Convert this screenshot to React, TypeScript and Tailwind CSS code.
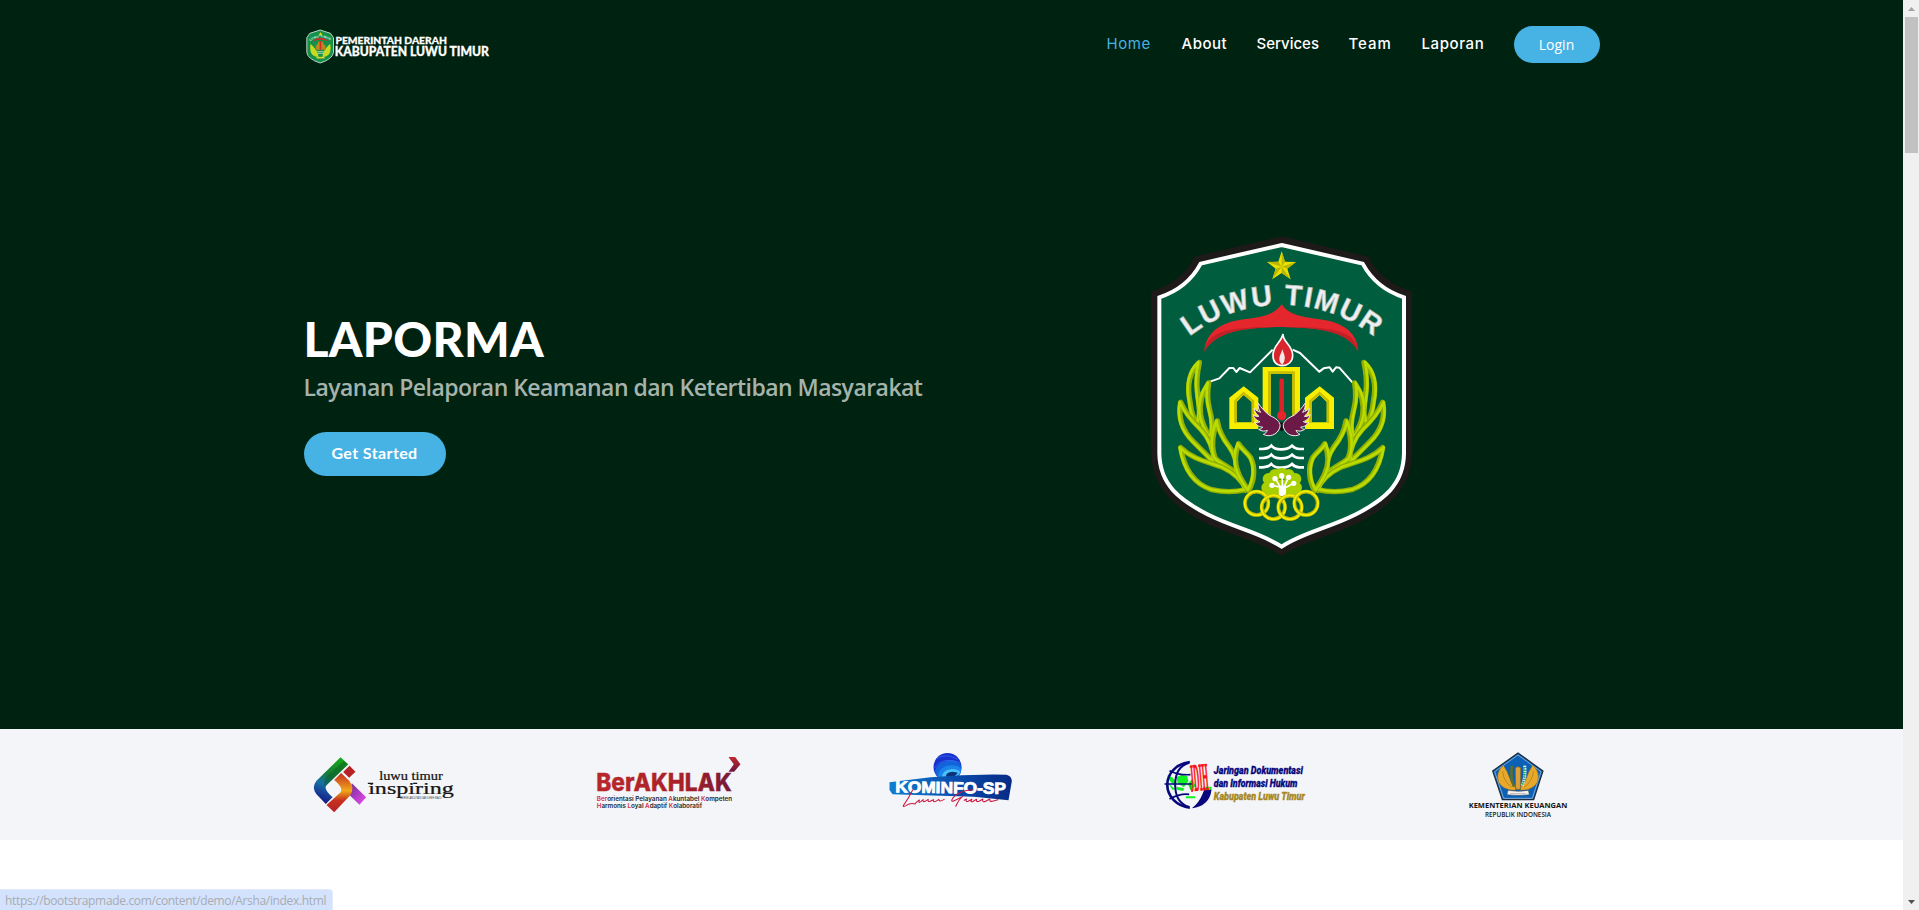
import React from "react";

const navItems = [
  { label: "About", box: "w-[45px] tracking-[0.5px]" },
  { label: "Services", box: "w-[62px]" },
  { label: "Team", box: "w-[43px] tracking-[1px]" },
  { label: "Laporan", box: "w-[62px] tracking-[0.6px]" },
];

const LEAVES = [
  "M178 412 C148 440 140 480 150 530 C153 560 160 580 172 602 C184 570 176 540 172 500 C168 465 172 440 178 412Z",
  "M206 474 C188 500 176 530 182 570 C186 600 200 620 212 640 C222 610 216 580 208 550 C200 520 202 500 206 474Z",
  "M122 532 C114 575 124 615 160 650 C180 670 200 690 222 712 C222 670 208 640 182 612 C156 588 136 565 122 532Z",
  "M232 588 C218 625 212 665 226 700 C240 715 262 722 288 744 C294 715 286 690 268 665 C248 640 236 615 232 588Z",
  "M122 668 C132 730 160 776 215 794 C250 802 285 802 318 794 C306 765 285 745 250 728 C210 712 160 705 122 668Z",
  "M296 656 C282 690 284 720 296 746 C304 765 314 780 326 796 C344 765 346 725 332 698 C320 680 304 672 296 656Z",
];

function WreathHalf() {
  return (
    <g strokeLinejoin="round">
      <path d="M182 500 C190 600 205 690 322 800" fill="none" stroke="#96b900" strokeWidth="15" />
      {LEAVES.map((d) => (
        <g key={d}>
          <path d={d} fill="#005e3e" stroke="#93b000" strokeWidth="16" />
          <path d={d} fill="none" stroke="#bbdc00" strokeWidth="8" transform="translate(-3 -1)" />
        </g>
      ))}
    </g>
  );
}

function House() {
  return (
    <g>
      <path fillRule="evenodd" fill="#f7ee00" d="M268 518 L311 484 L355 518 V612 H268Z M290 531 L311 510 L335 531 V592 H290Z" />
      <path d="M286 594 V528 L311 504 L339 528 V594" fill="none" stroke="#c9bd00" strokeWidth="7" />
    </g>
  );
}

function Wing() {
  return (
    <path
      d="M420 598 C416 585 402 577 388 571 C375 560 364 549 355 535 C353 545 356 553 362 562 C354 559 348 556 342 550 C344 562 350 568 357 574 C350 575 344 573 339 569 C344 582 352 587 360 590 C354 594 349 594 344 592 C351 603 360 606 368 606 C365 611 360 613 356 613 C366 620 375 619 382 616 C380 622 376 626 370 628 C386 637 412 632 420 606Z"
      fill="#6b1946"
      stroke="#f5eef2"
      strokeWidth="3"
    />
  );
}

function Crest({ className }: { className?: string }) {
  return (
    <svg viewBox="0 0 855 1035" className={className} aria-label="Luwu Timur">
      <path
        d="M425 34 L686 95 Q720 168 816 200 V685 C814 790 745 845 665 888 C580 932 500 945 425 992 C350 945 270 932 185 888 C105 845 36 790 34 685 V200 Q130 168 164 95Z"
        fill="#1e1a19"
      />
      <path
        d="M425 60 L668 116 Q708 190 792 217 V685 C791 780 730 825 648 868 C565 910 490 922 425 965 C360 922 285 910 202 868 C120 825 59 780 58 685 V217 Q142 190 182 116Z"
        fill="#005e3e"
        stroke="#fff"
        strokeWidth="12"
      />
      <path d="M425 79 L435 110 L468 111 L442 131 L452 163 L425 144 L397 163 L407 131 L381 111 L415 110Z" fill="#e8e000" />
      <path d="M425 79 V125 L435 110Z M468 111 L425 125 L442 131Z M452 163 L425 125 V144Z M397 163 L425 125 L407 131Z M381 111 L425 125 L415 110Z" fill="#bdb600" />
      <path id="crest-arc" d="M148 334 A451 451 0 0 1 708 340" fill="none" />
      <g fontFamily="Liberation Sans, sans-serif" fontWeight="700" fontSize="86">
        <text fill="#efefef" stroke="#b9bfbb" strokeWidth="2">
          <textPath href="#crest-arc" textLength="596">LUWU TIMUR</textPath>
        </text>
      </g>
      <path
        d="M425 238 C446 268 480 275 525 281 C600 288 652 315 655 380 C625 325 560 308 425 306 C290 308 225 325 193 380 C198 315 250 288 325 281 C370 275 404 268 425 238Z"
        fill="#e5262d"
      />
      <path d="M193 380 C202 320 260 304 425 306 C290 308 225 325 193 380Z M655 380 C646 320 590 304 425 306 C560 308 625 325 655 380Z" fill="#c21f26" />
      <path d="M210 470 L238 460 L268 429 L280 429 L289 441 L299 429 L330 442 L398 374 M458 374 L480 384 L538 440 L551 430 L569 427 L578 440 L588 427 L598 428 L637 472" fill="none" stroke="#fff" strokeWidth="6" strokeLinejoin="round" />
      <path d="M429 327 C428 352 458 360 458 391 C458 411 443 422 427 422 C410 422 398 410 399 389 C400 360 424 352 429 327Z" fill="#d9252b" stroke="#fff" strokeWidth="5" />
      <path d="M427 372 C430 384 436 392 434 403 C433 412 429 416 427 419 C421 415 417 408 418 400 C419 388 426 382 427 372Z" fill="#f4e7e7" />
      <House />
      <g transform="translate(850 0) scale(-1 1)">
        <House />
      </g>
      <path d="M368 426 H480 V612 H457 V447 H392 V612 H368Z" fill="#f7ee00" />
      <path d="M388 600 V443 H461 V600" fill="none" stroke="#c9bd00" strokeWidth="8" />
      <path d="M425 467 V570" stroke="#dc232a" strokeWidth="14" strokeLinecap="round" />
      <circle cx="425" cy="572" r="14" fill="#e5262d" />
      <path d="M413 589 L425 593 L437 589 L434 613 L425 619 L416 613Z" fill="#111" />
      <Wing />
      <g transform="translate(850 0) scale(-1 1)">
        <Wing />
      </g>
      {[667, 694, 722].map((y) => (
        <path
          key={y}
          transform={`translate(0 ${y})`}
          d="M357 5 H368 Q386 4 394 -5 Q404 7 425 6 Q444 6 456 -5 Q466 6 480 5 H492"
          fill="none"
          stroke="#fff"
          strokeWidth="8"
        />
      ))}
      <WreathHalf />
      <g transform="translate(850 0) scale(-1 1)">
        <WreathHalf />
      </g>
      <g fill="#a8cf00">
        <circle cx="382" cy="788" r="18" />
        <circle cx="386" cy="762" r="18" />
        <circle cx="405" cy="750" r="18" />
        <circle cx="425" cy="746" r="18" />
        <circle cx="446" cy="750" r="18" />
        <circle cx="466" cy="762" r="18" />
        <circle cx="468" cy="788" r="18" />
        <path d="M378 765 H472 V812 H378Z" />
      </g>
      <path d="M419 812 V786 L396 781 M422 788 L406 761 M427 788 V752 M431 788 L446 757 M436 788 L461 775" fill="none" stroke="#fff" strokeWidth="5" />
      <path d="M417 782 H438 V814 H417Z" fill="#fff" />
      <g fill="#fff">
        <circle cx="396" cy="781" r="8" />
        <circle cx="405" cy="761" r="8" />
        <circle cx="425" cy="752" r="8" />
        <circle cx="446" cy="757" r="8" />
        <circle cx="461" cy="775" r="8" />
      </g>
      {[
        [350, 835],
        [400, 847],
        [450, 847],
        [498, 835],
      ].map(([x, y]) => (
        <g key={x} fill="none">
          <circle cx={x} cy={y} r="35" stroke="#bdb700" strokeWidth="11" />
          <circle cx={x} cy={y} r="36" stroke="#f2ee00" strokeWidth="6" />
        </g>
      ))}
    </svg>
  );
}

function BrandLogo() {
  return (
    <svg viewBox="40.5 0 570 180" className="h-[60px] w-[190px]">
      <path d="M89 45 L120 55 L129 68 V112 Q127 132 89 144 Q51 132 49 112 V68 L58 55Z" fill="#14904a" stroke="#b9d6c4" strokeWidth="3" />
      <path id="brand-arc" d="M59 78 Q89 56 121 78" fill="none" />
      <text fontFamily="Liberation Sans, sans-serif" fontWeight="700" fontSize="9" fill="#dff3e4">
        <textPath href="#brand-arc" textLength="64">LUWU TIMUR</textPath>
      </text>
      <path d="M90 51 L92 56 L97 56 L93 59 L95 64 L90 61 L85 64 L87 59 L83 56 L88 56Z" fill="#e7dc1d" />
      <path d="M66 79 Q72 70 90 68 Q108 70 115 79 Q90 70 66 79Z" fill="#d22b2b" />
      <path d="M60 86 Q54 124 84 126 Q84 108 60 86Z M119 86 Q126 124 96 126 Q95 108 119 86Z" fill="#c9d821" />
      <path d="M76 92 L82 86 V80 H98 V86 L105 92 V104 H76Z" fill="#b98a1e" />
      <path d="M90 78 V104" stroke="#d22b2b" strokeWidth="5" />
      <path d="M80 110 H100 M82 115 H98" stroke="#e8f5ea" strokeWidth="2" />
      <path d="M78 128 H102" stroke="#d9d32a" strokeWidth="5" />
      <g fontFamily="Lato, sans-serif" fontWeight="900" fill="#fff" stroke="#fff" strokeWidth=".8">
        <text x="135" y="87" fontSize="29" textLength="334" lengthAdjust="spacingAndGlyphs">PEMERINTAH DAERAH</text>
        <text x="133" y="123" fontSize="37" textLength="462" lengthAdjust="spacingAndGlyphs">KABUPATEN LUWU TIMUR</text>
      </g>
    </svg>
  );
}

const partnerSize = "h-[90px] w-40";

function InspiringLogo() {
  return (
    <svg viewBox="10.5 0 480 270" className={partnerSize}>
      <defs>
        <linearGradient id="insp-a" x1="0.6" y1="0" x2="0.3" y2="1">
          <stop offset="0" stopColor="#17a51b" />
          <stop offset="0.4" stopColor="#157b3c" />
          <stop offset="0.6" stopColor="#1572a5" />
          <stop offset="1" stopColor="#171187" />
        </linearGradient>
        <linearGradient id="insp-b" x1="0.3" y1="0" x2="0.3" y2="1">
          <stop offset="0" stopColor="#c32c22" />
          <stop offset="0.45" stopColor="#f2a81a" />
          <stop offset="0.7" stopColor="#c5301e" />
          <stop offset="1" stopColor="#b3242a" />
        </linearGradient>
        <linearGradient id="insp-c" x1="0" y1="0" x2="1" y2="1">
          <stop offset="0" stopColor="#6d2b92" />
          <stop offset="1" stopColor="#ef4df0" />
        </linearGradient>
      </defs>
      <g transform="translate(-2 0)">
        <path d="M122 52 L145 73 L80 136 Q70 147 98 172 L78 192 L50 163 Q34 142 50 122Z" fill="url(#insp-a)" />
        <path d="M145 73 L74 141 Q66 118 98 93 L132 62Z" fill="#07531b" opacity=".4" />
        <path d="M156 130 L199 172 L179 194 L148 164Z" fill="url(#insp-c)" />
        <path d="M124 99 L148 122 Q167 145 150 167 L103 217 L80 195 L121 158 Q133 145 103 120Z" fill="url(#insp-b)" />
        <path d="M149 77 L167 95 L148 113 L130 96Z" fill="#b62225" />
      </g>
      <g fontFamily="Liberation Serif, serif" fill="#151515" stroke="#151515" strokeWidth=".7">
        <text x="236" y="121" fontSize="35" textLength="191" lengthAdjust="spacingAndGlyphs">luwu timur</text>
        <text x="203" y="161" fontSize="52" textLength="257" lengthAdjust="spacingAndGlyphs">inspiring</text>
      </g>
      <path d="M202 130 H218 M338 130 H350" stroke="#151515" strokeWidth="4" />
      <text x="299" y="176" fontFamily="Liberation Sans, sans-serif" fontSize="8" fill="#444" textLength="124" lengthAdjust="spacingAndGlyphs">BERKELANJUTAN DAN LEBIH MAJU</text>
    </svg>
  );
}

function BerakhlakLogo() {
  const red = "#d92b33";
  return (
    <svg viewBox="862.5 0 480 270" className={partnerSize}>
      <defs>
        <linearGradient id="ber-g" gradientUnits="userSpaceOnUse" x1="890" y1="0" x2="1320" y2="0">
          <stop offset="0" stopColor="#b8272b" />
          <stop offset="0.6" stopColor="#a92028" />
          <stop offset="1" stopColor="#6c1740" />
        </linearGradient>
        <linearGradient id="ber-arrow" gradientUnits="userSpaceOnUse" x1="0" y1="51" x2="0" y2="95">
          <stop offset="0" stopColor="#c02a2c" />
          <stop offset="1" stopColor="#6c1740" />
        </linearGradient>
      </defs>
      <text x="887" y="154" fontFamily="Inter, sans-serif" fontWeight="800" fontSize="74" fill="url(#ber-g)" stroke="url(#ber-g)" strokeWidth="1" textLength="407" lengthAdjust="spacingAndGlyphs">BerAKHLAK</text>
      <path d="M1284 51 H1304 L1320 73 L1301 95 H1284 L1300 73Z" fill="url(#ber-arrow)" />
      <g fontFamily="Inter, sans-serif" fontWeight="600" fontSize="18" fill="#26262c">
        <text x="889" y="183" textLength="406" lengthAdjust="spacingAndGlyphs">
          <tspan fill={red}>Ber</tspan>orientasi Pelayanan <tspan fill={red}>A</tspan>kuntabel <tspan fill={red}>K</tspan>ompeten
        </text>
        <text x="889" y="205" textLength="316" lengthAdjust="spacingAndGlyphs">
          <tspan fill={red}>H</tspan>armonis <tspan fill={red}>L</tspan>oyal <tspan fill={red}>A</tspan>daptif <tspan fill={red}>K</tspan>olaboratif
        </text>
      </g>
    </svg>
  );
}

function KominfoLogo() {
  return (
    <svg viewBox="4.5 0 480 270" className={partnerSize}>
      <defs>
        <linearGradient id="kom-g" x1="0" y1="0" x2="1" y2="0">
          <stop offset="0" stopColor="#0d7fd3" />
          <stop offset="0.55" stopColor="#0a4bab" />
          <stop offset="1" stopColor="#062a86" />
        </linearGradient>
      </defs>
      <circle cx="231" cy="81" r="42" fill="#1932cf" />
      <path d="M192 94 Q205 60 248 61 Q266 65 272 78 Q276 116 240 122 Q200 120 192 94Z" fill="#1264dc" />
      <path d="M202 110 Q206 77 246 76 Q268 78 272 88 Q268 112 248 118 Q215 122 202 110Z" fill="#1c83ea" />
      <path d="M214 112 Q215 90 244 87 Q264 88 270 96 Q262 112 240 115Z" fill="#49c0fb" />
      <path d="M226 110 Q226 97 246 95 L262 98 Q254 110 240 112Z" fill="#0b3277" />
      <path d="M197 56 Q225 38 262 58 M192 84 Q214 48 270 68" fill="none" stroke="#3d6cf0" strokeWidth="2" />
      <path d="M57 127 L180 112 Q290 102 408 104 Q424 108 424 124 L414 181 L310 170 L66 163 L57 150Z" fill="url(#kom-g)" />
      <text x="74" y="157" fontFamily="Liberation Sans, sans-serif" fontWeight="700" fontSize="48" fill="#fff" stroke="#fff" strokeWidth="2.5" textLength="332" lengthAdjust="spacingAndGlyphs" transform="rotate(.8 74 157)">KOMINFO-SP</text>
      <g fill="none" stroke="#cc1742" strokeLinecap="round" strokeLinejoin="round">
        <path d="M126 151 Q114 176 99 196 Q96 203 106 197 Q120 188 134 192 M134 191 Q143 181 147 180 Q142 191 151 185 L158 179 Q156 187 164 184 L173 178 Q171 187 179 184 L189 179 Q187 188 196 184 L205 178 Q205 188 221 178" strokeWidth="3.2" />
        <path d="M308 149 Q266 151 248 173 Q238 188 251 182 L276 170 Q265 178 256 199 M281 181 L288 177 Q284 187 293 184 L304 178 Q298 186 306 185 L318 178 Q316 188 327 183 L337 177 Q334 190 347 183 L358 177 Q356 187 369 183 L382 179" strokeWidth="3.2" />
      </g>
    </svg>
  );
}

function JdihLogo() {
  return (
    <svg viewBox="858.5 0 480 270" className={partnerSize}>
      <path d="M893 106 L907 112 L920 126 L918 140 Q900 130 893 106Z M919 112 L934 105 L952 108 L956 124 L942 142 L924 130Z M954 132 L966 118 L978 138 L962 150Z M920 140 L944 145 L940 153 L920 149Z M948 169 H976 V175 H948Z M1000 140 H1025 V150 H1000Z M895 130 L916 147 L908 150Z" fill="#10f323" />
      <g fill="none" stroke="#08087c" strokeWidth="6">
        <path d="M960 66 A77 69 0 0 0 960 203" strokeWidth="8" />
        <path d="M958 68 Q916 80 916 134 Q916 188 958 201" />
        <path d="M884 132 H966 M899 92 Q926 106 962 104 M899 177 Q930 160 958 163" strokeWidth="5" />
      </g>
      <path d="M1025 149 Q1020 197 966 205 Q988 188 998 162 L1003 150Z" fill="#08087c" />
      <text x="961" y="151" fontFamily="Liberation Serif, serif" fontWeight="700" fontSize="116" fill="#fa1111" stroke="#fa1111" strokeWidth="3" textLength="54" lengthAdjust="spacingAndGlyphs" transform="rotate(-5 990 120)">JDIH</text>
      <g fontFamily="Roboto, sans-serif" fontWeight="900" fontStyle="italic" fontSize="30" fill="#08087c" stroke="#08087c" strokeWidth=".8">
        <text x="1032" y="101" textLength="267" lengthAdjust="spacingAndGlyphs">Jaringan Dokumentasi</text>
        <text x="1032" y="140" textLength="251" lengthAdjust="spacingAndGlyphs">dan Informasi Hukum</text>
        <text x="1032" y="179" textLength="273" lengthAdjust="spacingAndGlyphs" fill="#a78726" stroke="#a78726">Kabupaten Luwu Timur</text>
      </g>
    </svg>
  );
}

function KemenkeuLogo() {
  return (
    <svg viewBox="-30 0 480 270" className={partnerSize}>
      <path d="M204 39 L279 93 L251 179 H157 L128 93Z" fill="#0b61b5" stroke="#1d2b3c" strokeWidth="3.5" />
      <path d="M204 45 L273 95 L247 175 H161 L134 95Z" fill="none" stroke="#b9cfe2" strokeWidth="2" />
      <g fill="#e8a92b" stroke="#a87414" strokeWidth="1.5">
        <path d="M160 76 Q136 98 146 126 Q158 150 196 151 L195 138 Q184 134 180 118 Q172 94 160 76Z" />
        <path d="M248 76 Q272 98 262 126 Q250 150 212 151 L213 138 Q224 134 228 118 Q236 94 248 76Z" />
      </g>
      <path d="M158 94 Q160 124 186 142 M250 94 Q248 124 222 142" fill="none" stroke="#a87414" strokeWidth="2" />
      <path d="M186 77 Q180 110 192 140" fill="none" stroke="#5d6f2a" strokeWidth="8" />
      <path d="M224 77 Q228 110 216 138" fill="none" stroke="#d7efe0" strokeWidth="9" strokeDasharray="5 2" />
      <path d="M222 82 Q226 110 216 138" fill="none" stroke="#18a355" strokeWidth="4" strokeDasharray="4 3" />
      <path d="M196 84 Q204 76 212 84 L211 148 H197Z" fill="#dca03a" stroke="#8b6420" strokeWidth="2" />
      <path d="M174 151 Q204 157 235 151 L238 164 Q204 168 171 164Z" fill="#f2f2f2" stroke="#444" strokeWidth="1.5" />
      <text x="181" y="162" fontFamily="Liberation Sans, sans-serif" fontSize="7" fill="#333" textLength="46" lengthAdjust="spacingAndGlyphs">NAGARA DANA RAKCA</text>
      <g fontFamily="Open Sans, sans-serif" fill="#151515">
        <text x="56" y="204" fontWeight="700" fontSize="22" textLength="296" lengthAdjust="spacingAndGlyphs">KEMENTERIAN KEUANGAN</text>
        <text x="105" y="230" fontWeight="600" fontSize="20" textLength="198" lengthAdjust="spacingAndGlyphs">REPUBLIK INDONESIA</text>
      </g>
    </svg>
  );
}

function Scrollbar() {
  return (
    <div className="flex h-full w-4 shrink-0 flex-col items-center bg-[#f0f0f0]">
      <svg viewBox="0 0 16 17" className="h-[17px] w-4 shrink-0">
        <path d="M5 11 L8.5 7 L12 11Z" fill="#a3a3a3" />
      </svg>
      <div className="ml-px h-[136px] w-[13px] bg-[#c1c1c1]" />
      <svg viewBox="0 0 16 17" className="mt-auto h-[17px] w-4 shrink-0">
        <path d="M5 7 L8.5 11 L12 7Z" fill="#505050" />
      </svg>
    </div>
  );
}

export default function App() {
  return (
    <div className="relative flex h-[910px] w-full overflow-hidden bg-white font-['Open_Sans',sans-serif]">
      <div className="flex min-w-0 flex-1 flex-col">
        <div className="flex h-[729px] flex-col bg-[#002211]">
          <header className="mx-auto flex w-[1296px] items-start justify-between pt-[15px]">
            <BrandLogo />
            <nav className="flex items-center gap-[30px] pt-[11px] font-['Inter',sans-serif] text-[15px] font-medium text-white">
              <a className="w-[45px] tracking-[0.6px] whitespace-nowrap font-normal text-[#47b2e4]">Home</a>
              {navItems.map((item) => (
                <a key={item.label} className={`whitespace-nowrap ${item.box}`}>
                  {item.label}
                </a>
              ))}
              <a className="flex h-[37px] w-[86px] items-center justify-center rounded-full bg-[#47b2e4] font-['Open_Sans',sans-serif] text-sm font-normal">
                Login
              </a>
            </nav>
          </header>
          <main className="mx-auto flex w-[1296px] pt-[150px]">
            <div className="flex w-[661px] flex-col items-start pt-[86px]">
              <h1 className="font-['Lato',sans-serif] text-[48px] leading-[56px] font-black tracking-[0.3px] text-white">
                LAPORMA
              </h1>
              <p className="mt-1 text-[23px] leading-8 font-semibold tracking-[-0.54px] whitespace-nowrap text-[#a6b3ab]">
                Layanan Pelaporan Keamanan dan Ketertiban Masyarakat
              </p>
              <a className="mt-[29px] flex h-11 w-[142px] items-center justify-center rounded-full bg-[#47b2e4] pb-0.5 font-['Lato',sans-serif] text-base font-bold tracking-[0.4px] text-white">
                Get Started
              </a>
            </div>
            <div className="flex flex-1 justify-center">
              <Crest className="h-[345px] w-[285px]" />
            </div>
          </main>
        </div>
        <section className="h-[111px] bg-[#f3f5f8] pt-[11px]">
          <div className="mx-auto flex w-[1296px] justify-between">
            <InspiringLogo />
            <BerakhlakLogo />
            <KominfoLogo />
            <JdihLogo />
            <KemenkeuLogo />
          </div>
        </section>
      </div>
      <Scrollbar />
      <div className="absolute bottom-0 left-0 flex h-[21px] w-[333px] items-center rounded-tr-[4px] border-t border-r border-[#e3ebfa] bg-[#d3e3fd] pt-0.5 pl-[5px] text-xs tracking-[-0.34px] whitespace-nowrap text-[#a9abb0]">
        https://bootstrapmade.com/content/demo/Arsha/index.html
      </div>
    </div>
  );
}
